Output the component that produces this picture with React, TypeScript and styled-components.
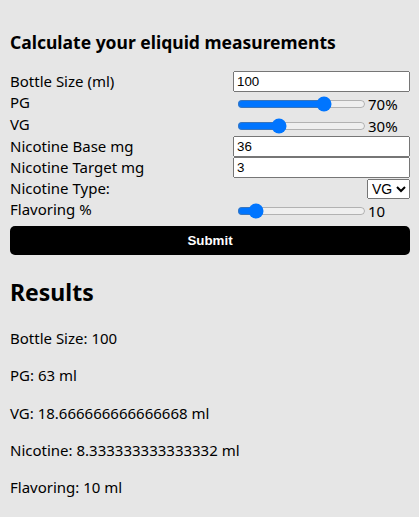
import React, { useState } from "react";
import styled, { createGlobalStyle } from "styled-components";

const Global = createGlobalStyle`
  html, body { margin: 0; padding: 0; background: #e6e6e6; }
  body { font-family: "Noto Sans", "Open Sans", sans-serif; color: #000; }
`;

const Page = styled.div`
  padding: 0 9px 0 10px;
  width: 400px;
`;

const Title = styled.h3`
  margin: 30px 0 16px;
  font-size: 17.5px;
  line-height: 25px;
  font-weight: 700;
`;

const Form = styled.form`
  display: flex;
  flex-direction: column;
`;

const Row = styled.div<{ $h?: number }>`
  display: grid;
  grid-template-columns: 223px 177px;
  height: ${(p) => p.$h ?? 21}px;
  align-items: start;
`;

const Label = styled.label`
  font-size: 15px;
  line-height: 21px;
`;

const Cell = styled.div<{ $end?: boolean }>`
  display: flex;
  align-items: center;
  justify-content: ${(p) => (p.$end ? "flex-end" : "flex-start")};
  height: 100%;
`;

const TextInput = styled.input`
  width: 100%;
  box-sizing: border-box;
  height: 21px;
  margin: 0;
`;

const Range = styled.input`
  width: 129px;
  margin: 0 2px 0 4px;
`;

const Value = styled.span`
  font-size: 15px;
  line-height: 21px;
  margin-top: 2px;
`;

const Select = styled.select`
  margin: 1px 0 0;
  height: 20px;
  font-family: "Liberation Sans", Arial, sans-serif;
  font-size: 14px;
`;

const Submit = styled.button`
  margin-top: 5px;
  height: 29px;
  border: none;
  border-radius: 5px;
  background: #000;
  color: #fff;
  font-family: "Liberation Sans", Arial, sans-serif;
  font-weight: 700;
  font-size: 13.33px;
  width: 100%;
`;

const ResultsTitle = styled.h2`
  margin: 21px 0 20px;
  font-size: 23px;
  line-height: 32px;
  font-weight: 700;
`;

const Result = styled.p`
  margin: 0 0 16px;
  font-size: 15px;
  line-height: 21.3px;
`;

export default function App() {
  const [bottle, setBottle] = useState("100");
  const [pg, setPg] = useState(70);
  const [base, setBase] = useState("36");
  const [target, setTarget] = useState("3");
  const [type, setType] = useState("VG");
  const [flavor, setFlavor] = useState(10);
  const vg = 100 - pg;

  return (
    <>
      <Global />
      <Page>
        <Title>Calculate your eliquid measurements</Title>
        <Form onSubmit={(e) => e.preventDefault()}>
          <Row>
            <Label>Bottle Size (ml)</Label>
            <Cell>
              <TextInput value={bottle} onChange={(e) => setBottle(e.target.value)} />
            </Cell>
          </Row>
          <Row $h={22}>
            <Label>PG</Label>
            <Cell>
              <Range type="range" min={0} max={100} value={pg} onChange={(e) => setPg(+e.target.value)} />
              <Value>{pg}%</Value>
            </Cell>
          </Row>
          <Row $h={22}>
            <Label>VG</Label>
            <Cell>
              <Range type="range" min={0} max={100} value={vg} onChange={(e) => setPg(100 - +e.target.value)} />
              <Value>{vg}%</Value>
            </Cell>
          </Row>
          <Row>
            <Label>Nicotine Base mg</Label>
            <Cell>
              <TextInput value={base} onChange={(e) => setBase(e.target.value)} />
            </Cell>
          </Row>
          <Row>
            <Label>Nicotine Target mg</Label>
            <Cell>
              <TextInput value={target} onChange={(e) => setTarget(e.target.value)} />
            </Cell>
          </Row>
          <Row>
            <Label>Nicotine Type:</Label>
            <Cell $end>
              <Select value={type} onChange={(e) => setType(e.target.value)}>
                <option>VG</option>
                <option>PG</option>
              </Select>
            </Cell>
          </Row>
          <Row $h={22}>
            <Label>Flavoring %</Label>
            <Cell>
              <Range type="range" min={0} max={100} value={flavor} onChange={(e) => setFlavor(+e.target.value)} />
              <Value>{flavor}</Value>
            </Cell>
          </Row>
          <Submit type="submit">Submit</Submit>
        </Form>
        <ResultsTitle>Results</ResultsTitle>
        <Result>Bottle Size: 100</Result>
        <Result>PG: 63 ml</Result>
        <Result>VG: 18.666666666666668 ml</Result>
        <Result>Nicotine: 8.333333333333332 ml</Result>
        <Result>Flavoring: 10 ml</Result>
      </Page>
    </>
  );
}
